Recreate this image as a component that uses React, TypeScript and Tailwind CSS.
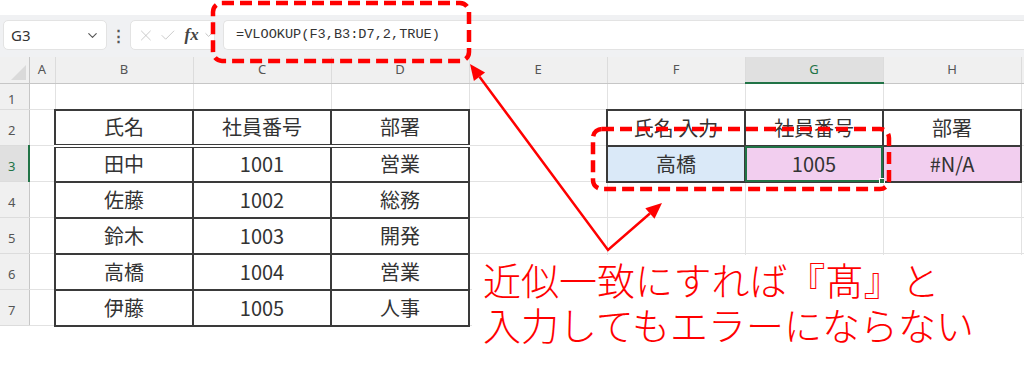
import { ChevronDown, X, Check } from "lucide-react";

const JP = "font-['Noto_Sans_CJK_JP','Noto_Sans',sans-serif]";

const colWidths = [29, 26, 138, 138, 138, 138, 138, 138, 138, 20];
const letters = ["A", "B", "C", "D", "E", "F", "G", "H", ""];

type Cell = { text?: string; fill?: string; double?: boolean; selected?: boolean };

const rows: { h: number; cells: Record<string, Cell> }[] = [
  { h: 26, cells: {} },
  {
    h: 36,
    cells: {
      B: { text: "氏名", double: true },
      C: { text: "社員番号", double: true },
      D: { text: "部署", double: true },
      F: { text: "氏名 入力" },
      G: { text: "社員番号" },
      H: { text: "部署" },
    },
  },
  {
    h: 36,
    cells: {
      B: { text: "田中" },
      C: { text: "1001" },
      D: { text: "営業" },
      F: { text: "高橋", fill: "bg-[#dae9f8]" },
      G: { text: "1005", fill: "bg-[#f2ceef]", selected: true },
      H: { text: "#N/A", fill: "bg-[#f2ceef]" },
    },
  },
  { h: 36, cells: { B: { text: "佐藤" }, C: { text: "1002" }, D: { text: "総務" } } },
  { h: 36, cells: { B: { text: "鈴木" }, C: { text: "1003" }, D: { text: "開発" } } },
  { h: 36, cells: { B: { text: "高橋" }, C: { text: "1004" }, D: { text: "営業" } } },
  { h: 36, cells: { B: { text: "伊藤" }, C: { text: "1005" }, D: { text: "人事" } } },
];

function FormulaBar() {
  return (
    <div className="h-[42px] bg-[#f0f1f3] flex items-start pt-[5px] pl-[3px]">
      <div className="w-[104px] h-[30px] bg-white rounded-[5px] border border-[#e3e3e3] flex items-center justify-between pl-[7px] pr-[6px]">
        <span className="text-[15px] text-[#333] font-['Noto_Sans',sans-serif]">G3</span>
        <ChevronDown size={15} strokeWidth={1.8} className="text-[#555]" />
      </div>
      <div className="w-[23px] h-[30px] flex items-center justify-center text-[#555] text-[15px] font-bold">⋮</div>
      <div className="w-[85px] h-[30px] bg-white rounded-[5px] border border-[#e3e3e3] flex items-center pl-[6px] gap-[4px]">
        <X size={19} strokeWidth={1} className="text-[#b8b8b8]" />
        <Check size={19} strokeWidth={1} className="text-[#b8b8b8]" />
        <span className="ml-[4px] text-[17px] italic font-bold text-[#444] font-['Liberation_Serif',serif]">fx</span>
        <ChevronDown size={12} strokeWidth={1.5} className="text-[#aaa]" />
      </div>
      <div className="ml-[8px] flex-1 h-[30px] bg-white rounded-l-[5px] border border-r-0 border-[#e3e3e3] flex items-center pl-[12px]">
        <span className="text-[13.6px] text-[#333] font-['Liberation_Mono',monospace]">=VLOOKUP(F3,B3:D7,2,TRUE)</span>
      </div>
    </div>
  );
}

function Sheet() {
  return (
    <table className={`border-collapse table-fixed ${JP}`} style={{ width: colWidths.reduce((a, b) => a + b, 0) }}>
      <colgroup>
        {colWidths.map((w, i) => (
          <col key={i} style={{ width: w }} />
        ))}
      </colgroup>
      <thead>
        <tr className="h-[26px]">
          <th className="relative bg-[#f0f0f0] border-b border-r border-[#c6c6c6] p-0">
            <div className="absolute right-[3px] bottom-[3px] w-0 h-0 border-l-[15px] border-l-transparent border-b-[15px] border-b-[#dadada]" />
          </th>
          {letters.map((l, i) => (
            <th
              key={i}
              className={`p-0 font-normal text-[13px] font-['Noto_Sans',sans-serif] border-r border-[#dcdcdc] ${
                l === "G"
                  ? "bg-[#e0e0e0] text-[#217346] border-b-2 border-b-[#217346]"
                  : "bg-[#f0f0f0] text-[#555] border-b border-b-[#c6c6c6]"
              }`}
            >
              {l}
            </th>
          ))}
        </tr>
      </thead>
      <tbody>
        {rows.map((r, ri) => (
          <tr key={ri} style={{ height: r.h }}>
            <td
              className={`p-0 pl-[8px] pt-[6px] text-[13px] font-['Noto_Sans',sans-serif] border-b border-[#dcdcdc] ${
                ri === 2
                  ? "bg-[#e0e0e0] text-[#217346] border-r-2 border-r-[#217346]"
                  : "bg-[#f0f0f0] text-[#555] border-r border-r-[#c6c6c6]"
              }`}
            >
              {ri + 1}
            </td>
            {letters.map((l, ci) => {
              const c = r.cells[l];
              if (!c) {
                return <td key={ci} className="p-0 border border-[#e2e2e2]" />;
              }
              return (
                <td
                  key={ci}
                  className={`relative p-0 text-center text-[20px] leading-none text-[#333] border-2 border-[#3a3a3a] ${
                    c.double ? "border-b-[4px] border-b-[#3a3a3a] border-double" : ""
                  } ${c.fill ?? ""}`}
                >
                  {c.text}
                  {c.selected && (
                    <div className="absolute -inset-[1px] border-2 border-[#217346]">
                      <div className="absolute -right-[4px] -bottom-[4px] w-[6px] h-[6px] bg-[#217346] border border-white" />
                    </div>
                  )}
                </td>
              );
            })}
          </tr>
        ))}
      </tbody>
    </table>
  );
}

function Annotations() {
  return (
    <svg className="absolute inset-0 pointer-events-none" width="1024" height="374">
      <rect x="213" y="3" width="256" height="58" rx="9" fill="none" stroke="#ff0000" strokeWidth="4.5" strokeDasharray="12 6" />
      <rect x="593" y="129" width="296" height="60" rx="9" fill="none" stroke="#ff0000" strokeWidth="4.5" strokeDasharray="12 6" />
      <polyline points="479.5,76.8 608,250 649.9,213.5" fill="none" stroke="#ff0000" strokeWidth="2.5" strokeLinejoin="miter" />
      <polygon points="470,64 485.1,72.6 473.9,81" fill="#ff0000" />
      <polygon points="662,203 654.5,218.8 645.3,208.2" fill="#ff0000" />
    </svg>
  );
}

export default function App() {
  return (
    <div className="relative w-[1024px] h-[374px] overflow-hidden bg-white">
      <div className="h-[15px] bg-white" />
      <FormulaBar />
      <Sheet />
      <div className={`absolute left-[472px] top-[255px] right-0 bottom-0 bg-white pl-[11px] pt-[1px] text-[38px] leading-[45px] font-light text-[#ff0000] ${JP}`}>
        <p>近似一致にすれば『髙』と</p>
        <p>入力してもエラーにならない</p>
      </div>
      <Annotations />
    </div>
  );
}
